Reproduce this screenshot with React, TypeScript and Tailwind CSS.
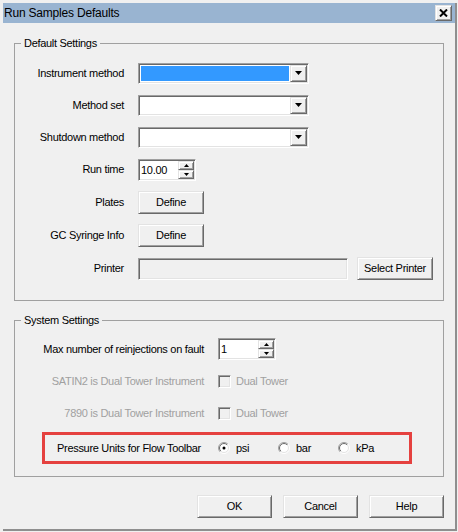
import type { ReactNode } from 'react'

const raised =
  'bg-[#f0f0f0] border border-t-[#e3e3e3] border-l-[#e3e3e3] border-r-[#696969] border-b-[#696969] shadow-[inset_1px_1px_0_#ffffff,inset_-1px_-1px_0_#a0a0a0]'
const sunken =
  'border border-t-[#a0a0a0] border-l-[#a0a0a0] border-r-white border-b-white shadow-[inset_1px_1px_0_#696969,inset_-1px_-1px_0_#e3e3e3]'

const DownArrow = () => (
  <svg width="7" height="4" viewBox="0 0 7 4">
    <polygon points="0,0 7,0 3.5,4" fill="#000" />
  </svg>
)

const Combo = ({ selected }: { selected?: boolean }) => (
  <div className={`w-[171px] h-[21px] flex p-[1px] bg-white ${sunken}`}>
    <div className="flex-1 p-[1px]">
      <div className={`h-full ${selected ? 'bg-[#3399ff]' : 'bg-white'}`} />
    </div>
    <div className={`w-[17px] flex items-center justify-center ${raised}`}>
      <DownArrow />
    </div>
  </div>
)

const Spin = ({ value }: { value: string }) => (
  <div className={`w-[58px] h-[22px] flex p-[1px] bg-white ${sunken}`}>
    <div className="flex-1 pl-[1px] text-[11px] leading-[18px] text-black">{value}</div>
    <div className="w-[16px] flex flex-col">
      <div className={`flex-1 flex items-center justify-center ${raised}`}>
        <svg width="5" height="3" viewBox="0 0 5 3">
          <polygon points="2.5,0 5,3 0,3" fill="#000" />
        </svg>
      </div>
      <div className={`flex-1 flex items-center justify-center ${raised}`}>
        <svg width="5" height="3" viewBox="0 0 5 3">
          <polygon points="0,0 5,0 2.5,3" fill="#000" />
        </svg>
      </div>
    </div>
  </div>
)

const Btn = ({ children, className }: { children: ReactNode; className: string }) => (
  <div className={`flex items-center justify-center text-[11px] text-black ${raised} ${className}`}>
    {children}
  </div>
)

const Check = () => <div className={`w-[13px] h-[13px] bg-[#f0f0f0] ${sunken}`} />

const Radio = ({ id, checked }: { id: string; checked?: boolean }) => (
  <svg width="12" height="12" viewBox="0 0 12 12">
    <defs>
      <linearGradient id={`ro${id}`} x1="0" y1="0" x2="1" y2="1">
        <stop offset="0.5" stopColor="#a0a0a0" />
        <stop offset="0.5" stopColor="#ffffff" />
      </linearGradient>
      <linearGradient id={`ri${id}`} x1="0" y1="0" x2="1" y2="1">
        <stop offset="0.5" stopColor="#696969" />
        <stop offset="0.5" stopColor="#e3e3e3" />
      </linearGradient>
    </defs>
    <circle cx="6" cy="6" r="5.5" fill="none" stroke={`url(#ro${id})`} />
    <circle cx="6" cy="6" r="4.5" fill="#ffffff" stroke={`url(#ri${id})`} />
    {checked && <circle cx="6" cy="6" r="1.5" fill="#000" />}
  </svg>
)

const Row = ({
  label,
  className,
  labelW,
  disabled,
  children,
}: {
  label: string
  className: string
  labelW: string
  disabled?: boolean
  children: ReactNode
}) => (
  <div className={`flex items-center ${className}`}>
    <div className={`${labelW} text-right ${disabled ? 'text-[#a0a0a0]' : 'text-black'}`}>{label}</div>
    <div className="ml-[14px] flex items-center">{children}</div>
  </div>
)

export default function App() {
  return (
    <div className="w-[458px] h-[532px] bg-[#f0f0f0] pt-[3px] pl-[3px] pr-[1px] pb-[1px] font-['Liberation_Sans',Arial,sans-serif] text-[11px] tracking-[-0.3px]">
      <div className="h-full flex flex-col border-r-2 border-b-2 border-[#8f8f8f]">
        {/* title bar */}
        <div className="h-[20px] bg-[#99b4d1] flex items-center justify-between pl-[1px] pr-[3px]">
          <span className="text-[12px] tracking-[-0.2px] text-black">Run Samples Defaults</span>
          <div className={`w-[17px] h-[16px] flex items-center justify-center ${raised}`}>
            <svg width="9" height="8" viewBox="0 0 9 8">
              <path d="M1 0.5 L8 7.5 M8 0.5 L1 7.5" stroke="#000" strokeWidth="2" />
            </svg>
          </div>
        </div>

        <fieldset className="mt-[14px] ml-[11px] w-[430px] border border-[#a0a0a0] pt-[7px] pb-[15px]">
          <legend className="ml-[6px] px-[3px] leading-[13px] text-black">Default Settings</legend>
          <Row label="Instrument method" labelW="w-[109px]" className="h-[32px]">
            <Combo selected />
          </Row>
          <Row label="Method set" labelW="w-[109px]" className="h-[32px]">
            <Combo />
          </Row>
          <Row label="Shutdown method" labelW="w-[109px]" className="h-[32px]">
            <Combo />
          </Row>
          <Row label="Run time" labelW="w-[109px]" className="h-[33px]">
            <Spin value="10.00" />
          </Row>
          <Row label="Plates" labelW="w-[109px]" className="h-[33px]">
            <Btn className="w-[66px] h-[23px]">Define</Btn>
          </Row>
          <Row label="GC Syringe Info" labelW="w-[109px]" className="h-[33px]">
            <Btn className="w-[66px] h-[23px]">Define</Btn>
          </Row>
          <Row label="Printer" labelW="w-[109px]" className="h-[33px]">
            <div className={`w-[210px] h-[22px] bg-[#f0f0f0] ${sunken}`} />
            <Btn className="ml-[9px] w-[76px] h-[23px]">Select Printer</Btn>
          </Row>
        </fieldset>

        <fieldset className="mt-[13px] ml-[11px] w-[430px] border border-[#a0a0a0] pt-[6px] pb-[12px]">
          <legend className="ml-[6px] px-[3px] leading-[13px] text-black">System Settings</legend>
          <Row label="Max number of reinjections on fault" labelW="w-[189px]" className="h-[32px]">
            <Spin value="1" />
          </Row>
          <Row label="SATIN2 is Dual Tower Instrument" labelW="w-[189px]" className="h-[32px]" disabled>
            <Check />
            <span className="ml-[5px] text-[#a0a0a0]">Dual Tower</span>
          </Row>
          <Row label="7890 is Dual Tower Instrument" labelW="w-[189px]" className="h-[32px]" disabled>
            <Check />
            <span className="ml-[5px] text-[#a0a0a0]">Dual Tower</span>
          </Row>
          <div className="mt-[3px] ml-[27px] w-[370px] h-[32px] border-[3px] border-[#e5413f] flex items-center pl-[12px] text-black">
            <span className="w-[161px]">Pressure Units for Flow Toolbar</span>
            <div className="w-[60px] flex items-center gap-[6px]">
              <Radio id="psi" checked />
              <span>psi</span>
            </div>
            <div className="w-[60px] flex items-center gap-[6px]">
              <Radio id="bar" />
              <span>bar</span>
            </div>
            <div className="w-[60px] flex items-center gap-[6px]">
              <Radio id="kpa" />
              <span>kPa</span>
            </div>
          </div>
        </fieldset>

        <div className="mt-[18px] ml-[11px] w-[430px] flex justify-end gap-[11px]">
          <Btn className="w-[75px] h-[23px]">OK</Btn>
          <Btn className="w-[75px] h-[23px]">Cancel</Btn>
          <Btn className="w-[75px] h-[23px]">Help</Btn>
        </div>
      </div>
    </div>
  )
}
